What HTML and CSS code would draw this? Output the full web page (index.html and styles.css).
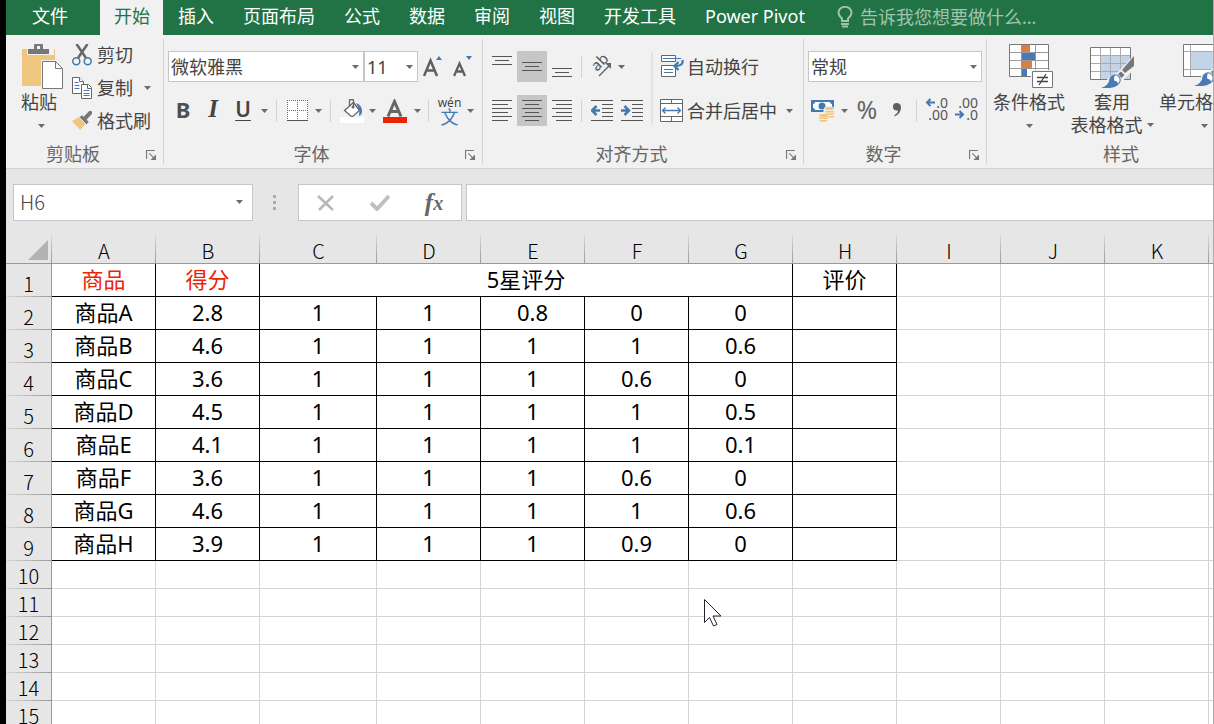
FILE: index.html
```
<!DOCTYPE html>
<html lang="zh-CN">
<head>
<meta charset="utf-8">
<title>Excel</title>
<link rel="stylesheet" href="styles.css">
</head>
<body>
<svg class="defs" aria-hidden="true">
  <symbol id="caret" viewBox="0 0 7 4"><path d="M0 0h7L3.500 4z" fill="#6b6b6b"/></symbol>
  <symbol id="launcher" viewBox="0 0 9 9"><path d="M.5 8V.5H8M3 3l4 4" fill="none" stroke="#777"/><path d="M9 4v5H4z" fill="#777"/></symbol>
  <symbol id="brush" viewBox="0 0 46 46"><path d="M46 7v15L35 32l-4 7q-4 5-10 5H8q9-3 9-10 4-7 10-7z" fill="#f1f1f1"/><path d="M44 10v10l-9 7-3-3z" fill="#777"/><path d="M31 25.500l3.500 3.500-3 3-3.500-4z" fill="#777"/><circle cx="25" cy="34" r="5.200" fill="#fff" stroke="#4a86bd" stroke-width="1.200"/><path d="M11 42q7-2 9-9 1-3 5-4-2 5 0 6 3 0 3 4-4 3-8 3z" fill="#4a7ab3"/></symbol>
</svg>
<div class="app">
  <nav class="tabs">
    <button class="tab file">文件</button>
    <button class="tab active">开始</button>
    <button class="tab">插入</button>
    <button class="tab">页面布局</button>
    <button class="tab">公式</button>
    <button class="tab">数据</button>
    <button class="tab">审阅</button>
    <button class="tab">视图</button>
    <button class="tab">开发工具</button>
    <button class="tab">Power Pivot</button>
    <button class="tab tell">
      <svg width="16" height="22" viewBox="0 0 16 22" fill="none" stroke="#a0c4ae" stroke-width="2"><path d="M5 15v-2.500C3 10.500 1.500 9.500 1.500 6.800a6.500 6 0 0 1 13 0c0 2.700-1.500 3.700-3.500 5.700V15z"/><path d="M4 18h8M5 20.500h6"/></svg>
      告诉我您想要做什么...</button>
  </nav>

  <div class="ribbon">
    <section class="group clipboard">
      <div class="body clip">
        <button class="big paste">
          <svg width="42" height="46" viewBox="0 0 42 46"><path d="M2 5h31q1 0 1 1v36H2q-1 0-1-1V6q0-1 1-1z" fill="#eec67e"/><path d="M6 4h27v7H6z" fill="#f1f1f1"/><path d="M7 10V5h6V1q0-1 1-1h7q1 0 1 1v4h6v5z" fill="#777"/><path d="M16 2h3v3h-3z" fill="#f1f1f1"/><path d="M20 16h15l8 8v22H20z" fill="#f1f1f1"/><path d="M21.500 17.500h13l7 7v20h-20z" fill="#fff" stroke="#777"/><path d="M34.500 17.500v7h7" fill="none" stroke="#777"/></svg>
          <span>粘贴</span>
          <svg class="caret"><use href="#caret"/></svg>
        </button>
        <div class="stack">
          <button class="cmd"><svg width="20" height="22" viewBox="0 0 20 22"><path d="M4.500 0 14 14M15.500 0 6 14" stroke="#666" stroke-width="2.500"/><g fill="none" stroke="#4179b0" stroke-width="1.500"><circle cx="4.300" cy="17.300" r="3.500"/><circle cx="15.700" cy="17.300" r="3.500"/></g></svg>剪切</button>
          <button class="cmd"><svg width="20" height="22" viewBox="0 0 20 22"><g fill="#fff" stroke="#666"><path d="M.5.500h7l4 4v12H.5z"/><path d="M7.500.500v4h4"/><path d="M9.500 7.500h7l3 3v11h-10z"/><path d="M15.500 7.500v4h4"/></g><path d="M2.500 5.500h4M2.500 8.500h5M2.500 11.500h5M11.500 13.500h6M11.500 16.500h6M11.500 18.500h6" stroke="#4179b0"/></svg>复制<svg class="caret"><use href="#caret"/></svg></button>
          <button class="cmd"><svg width="20" height="20" viewBox="0 0 22 22"><path d="M0 11 9 6l7 7-7 8z" fill="#eec67e"/><path d="M8 7l3-3 8 8-3 3z" fill="#777" stroke="#f1f1f1"/><path d="M14 8.500l6-6.500" stroke="#777" stroke-width="4.500" stroke-linecap="round"/></svg>格式刷</button>
        </div>
      </div>
      <footer><span>剪贴板</span><button aria-label="剪贴板设置"><svg width="10" height="10"><use href="#launcher"/></svg></button></footer>
    </section>

    <section class="group font">
      <div class="body rows">
        <div class="row">
          <div class="combo family"><select aria-label="字体"><option>微软雅黑</option></select><svg class="caret"><use href="#caret"/></svg></div>
          <div class="combo size"><select aria-label="字号"><option>11</option></select><svg class="caret"><use href="#caret"/></svg></div>
          <button class="tool a" aria-label="增大字号"><svg width="20" height="23" viewBox="0 0 20 23"><path d="M1 21 7.500 5.500 14 21M3.500 15.500h8" fill="none" stroke="#5f5f5f" stroke-width="2.500"/><path d="M13 5h6l-3-4z" fill="#4179b0"/></svg></button>
          <button class="tool a" aria-label="减小字号"><svg width="20" height="23" viewBox="0 0 20 23"><path d="M1 21 6.500 8.500 12 21M3.500 16.500h6.500" fill="none" stroke="#5f5f5f" stroke-width="2.300"/><path d="M13 1h6l-3 4z" fill="#4179b0"/></svg></button>
        </div>
        <div class="row">
          <button class="tool bold">B</button>
          <button class="tool italic">I</button>
          <button class="tool under">U</button>
          <button class="drop" aria-label="下划线选项"><svg class="caret"><use href="#caret"/></svg></button>
          <i class="sep"></i>
          <button class="tool" aria-label="边框"><svg width="21" height="21" viewBox="0 0 21 21"><path d="M0 0h21v21H0z" fill="#fff"/><path d="M.5 0v20M10.500 0v20M20.500 0v20M0 .500h21M0 10.500h21" stroke="#666" stroke-dasharray="1 1" fill="none"/><path d="M0 20.500h21" stroke="#555"/></svg></button>
          <button class="drop" aria-label="边框选项"><svg class="caret"><use href="#caret"/></svg></button>
          <i class="sep"></i>
          <button class="tool" aria-label="填充颜色"><svg width="24" height="24" viewBox="0 0 24 24"><path d="M4.500 11.500l9-8 6 8-7.500 6.500z" fill="#fff" stroke="#666" stroke-width="1.300"/><path d="M9.500 7V1.500q0-1 1-1h2q1 0 1 1V8" fill="none" stroke="#666" stroke-width="1.300"/><circle cx="13" cy="8" r="1.500" fill="#666"/><path d="M16 4q6 2 6 8 0 4-3 5 1-6-1-9z" fill="#4179b0"/><path d="M0 18h24v6H0z" fill="#fff"/></svg></button>
          <button class="drop" aria-label="填充颜色选项"><svg class="caret"><use href="#caret"/></svg></button>
          <button class="tool wide" aria-label="字体颜色"><svg width="24" height="24" viewBox="0 0 24 24"><path d="M5 17.500 11.500 2.500 18 17.500M7 12.500h9" fill="none" stroke="#666" stroke-width="3"/><path d="M0 18h24v6H0z" fill="#ed2305"/></svg></button>
          <button class="drop" aria-label="字体颜色选项"><svg class="caret"><use href="#caret"/></svg></button>
          <i class="sep"></i>
          <button class="tool pinyin"><span>wén</span><b>文</b></button>
          <button class="drop" aria-label="拼音选项"><svg class="caret"><use href="#caret"/></svg></button>
        </div>
      </div>
      <footer><span>字体</span><button aria-label="字体设置"><svg width="10" height="10"><use href="#launcher"/></svg></button></footer>
    </section>

    <section class="group align">
      <div class="body split">
        <div class="rows">
          <div class="row">
            <button class="tool a" aria-label="顶端对齐"><svg width="20" height="22" viewBox="0 0 20 22" stroke="#555"><path d="M0 .500h20M3 4.500h14M0 8.500h20"/></svg></button>
            <button class="tool a on" aria-label="垂直居中"><svg width="20" height="22" viewBox="0 0 20 22" stroke="#555"><path d="M0 6.500h20M3 10.500h14M0 14.500h20"/></svg></button>
            <button class="tool a" aria-label="底端对齐"><svg width="20" height="22" viewBox="0 0 20 22" stroke="#555"><path d="M0 12.500h20M3 16.500h14M0 20.500h20"/></svg></button>
            <i class="sep"></i>
            <button class="tool a" aria-label="方向"><svg class="orient" width="22" height="22" viewBox="0 0 22 22"><text class="ab" transform="translate(6 16) rotate(-45)">ab</text><path d="M8 20 19 9" stroke="#666" stroke-width="1.500"/><path d="M20 7v6l-6-6z" fill="#666"/></svg></button>
            <button class="drop slim" aria-label="方向选项"><svg class="caret"><use href="#caret"/></svg></button>
          </div>
          <div class="row">
            <button class="tool a" aria-label="左对齐"><svg width="20" height="22" viewBox="0 0 20 22" stroke="#555"><path d="M0 .500h20M0 4.500h16M0 8.500h20M0 12.500h16M0 16.500h20M0 20.500h16"/></svg></button>
            <button class="tool a on" aria-label="居中"><svg width="20" height="22" viewBox="0 0 20 22" stroke="#555"><path d="M0 .500h20M3 4.500h14M0 8.500h20M3 12.500h14M0 16.500h20M3 20.500h14"/></svg></button>
            <button class="tool a" aria-label="右对齐"><svg width="20" height="22" viewBox="0 0 20 22" stroke="#555"><path d="M0 .500h20M4 4.500h16M0 8.500h20M4 12.500h16M0 16.500h20M4 20.500h16"/></svg></button>
            <i class="sep"></i>
            <button class="tool a" aria-label="减少缩进"><svg width="22" height="22" viewBox="0 0 22 22"><path d="M0 .500h22M11 4.500h11M11 8.500h11M11 12.500h11M11 16.500h11M0 20.500h22" stroke="#555"/><path d="M9 10.500H2M5.500 6 1 10.500 5.500 15" fill="none" stroke="#4179b0" stroke-width="2.500"/></svg></button>
            <button class="tool a" aria-label="增加缩进"><svg width="22" height="22" viewBox="0 0 22 22"><path d="M0 .500h22M11 4.500h11M11 8.500h11M11 12.500h11M11 16.500h11M0 20.500h22" stroke="#555"/><path d="M0 10.500h7M3.500 6 8 10.500 3.500 15" fill="none" stroke="#4179b0" stroke-width="2.500"/></svg></button>
          </div>
        </div>
        <i class="divider"></i>
        <div class="rows">
          <div class="row"><button class="cmd"><svg width="24" height="23" viewBox="0 0 24 23"><g fill="#fff" stroke="#666"><path d="M1.500.500h14v6h-14zM1.500 10.500h14v11h-14z"/></g><path d="M3 3.500h18M4 14.500h9M4 17.500h9" stroke="#4179b0"/><path d="M22.500 5q1 6-7 6M18.500 7l-4 4 4 4" fill="none" stroke="#4179b0" stroke-width="2.300"/></svg>自动换行</button></div>
          <div class="row"><button class="cmd"><svg width="24" height="23" viewBox="0 0 24 23"><path d="M.5.500h22v22H.5z" fill="#fff" stroke="#666"/><path d="M0 4.500h23M0 17.500h23M11.500 0v4M11.500 18v5" stroke="#666"/><path d="M3 11.500h17M5.500 8.500l-3 3 3 3M17.500 8.500l3 3-3 3" fill="none" stroke="#4179b0" stroke-width="1.300"/></svg>合并后居中<svg class="caret"><use href="#caret"/></svg></button></div>
        </div>
      </div>
      <footer><span>对齐方式</span><button aria-label="对齐设置"><svg width="10" height="10"><use href="#launcher"/></svg></button></footer>
    </section>

    <section class="group number">
      <div class="body rows">
        <div class="row"><div class="combo"><select aria-label="数字格式"><option>常规</option></select><svg class="caret"><use href="#caret"/></svg></div></div>
        <div class="row">
          <button class="tool a" aria-label="会计数字格式"><svg width="24" height="24" viewBox="0 0 24 24"><path d="M0 1h23v12H0z" fill="#4179b0"/><path d="M4 3h15q0 2 2 2v4q-2 0-2 2H4q0-2-2-2V5q2 0 2-2z" fill="#fff"/><circle cx="11" cy="7" r="3.500" fill="#4179b0"/><path d="M13 10q0-3 5-3t5 3v8h-6v5H7v-6q0-3 5-3z" fill="#f1f1f1"/><g fill="#eec67e"><ellipse cx="18.500" cy="9.500" rx="4.500" ry="1.500"/><path d="M14 12h9v1.500h-9zM14 14.500h9V16h-9zM17 17h6v1.500h-6z"/><ellipse cx="12.500" cy="16.500" rx="4.500" ry="1.500"/><path d="M8 18.500h9V20H8zM8 21h9q-1 2-4.500 2T8 21z"/></g></svg></button>
          <button class="drop" aria-label="会计格式选项"><svg class="caret"><use href="#caret"/></svg></button>
          <button class="tool percent">%</button>
          <button class="tool comma" aria-label="千位分隔样式"><svg width="10" height="16" viewBox="0 0 10 16"><path d="M4.500 1Q9 1 9 5.500q0 6-6.500 9V13Q6 11 6 8.500 1 9 1 4.700 1 1 4.500 1z" fill="#5f5f5f"/></svg></button>
          <i class="sep"></i>
          <button class="tool a dec"><span><svg width="10" height="9" viewBox="0 0 10 9"><path d="M10 4.500H2M5.500 1 2 4.500 5.500 8" fill="none" stroke="#4179b0" stroke-width="2"/></svg>.0</span><span>.00</span></button>
          <button class="tool a dec"><span>.00</span><span><svg width="10" height="9" viewBox="0 0 10 9"><path d="M0 4.500h8M4.500 1 8 4.500 4.500 8" fill="none" stroke="#4179b0" stroke-width="2"/></svg>.0</span></button>
        </div>
      </div>
      <footer><span>数字</span><button aria-label="数字设置"><svg width="10" height="10"><use href="#launcher"/></svg></button></footer>
    </section>

    <section class="group styles">
      <div class="body bigs">
        <button class="big cond">
          <svg width="46" height="46" viewBox="0 0 46 46"><path d="M1.500.500h39v32h-39z" fill="#fff" stroke="#777"/><path d="M2 8.500h38M2 16.500h38M2 24.500h38M13.500 1v31M27.500 1v31" stroke="#999"/><path d="M14 1h8v7h-8zM14 17h10v7H14z" fill="#dc7d43"/><path d="M14 9h13v7H14zM14 25h5v7h-5z" fill="#4a7ab3"/><path d="M23 26h22v19H23z" fill="#f1f1f1"/><path d="M24.500 27.500h20v16h-20z" fill="#fff" stroke="#777"/><path d="M29 33.500h11M29 37.500h11M38 30l-7 11" stroke="#444" stroke-width="1.300"/></svg>
          <span>条件格式</span><svg class="caret"><use href="#caret"/></svg>
        </button>
        <button class="big fmt">
          <svg width="46" height="46" viewBox="0 0 46 46"><path d="M1.500 3.500h40v32h-40z" fill="#fff" stroke="#777"/><path d="M12 12h29v23H12z" fill="#c2d4e6"/><path d="M2 11.500h39M2 19.500h39M2 27.500h39M11.500 4v31M21.500 4v31M31.500 4v31" stroke="#aaa"/><use href="#brush" x="1" y="2" width="46" height="46"/></svg>
          <span>套用</span><span class="line2">表格格式<svg class="caret"><use href="#caret"/></svg></span>
        </button>
        <button class="big cell">
          <svg width="46" height="46" viewBox="0 0 46 46"><path d="M2.500.500h40v32h-40z" fill="#fff" stroke="#777"/><path d="M3 7.500h39M3 25.500h39M9.500 1v31M36.500 1v31" stroke="#aaa"/><path d="M10 8h26v17H10z" fill="#c2d4e6"/><use href="#brush" x="2" width="46" height="46"/></svg>
          <span>单元格样式</span><svg class="caret"><use href="#caret"/></svg>
        </button>
      </div>
      <footer><span>样式</span></footer>
    </section>
  </div>

  <div class="formula">
    <div class="combo namebox"><input aria-label="名称框" value="H6"><svg class="caret"><use href="#caret"/></svg></div>
    <svg class="dots" width="3" height="15" viewBox="0 0 3 15" fill="#aaa"><path d="M0 0h3v3H0zM0 6h3v3H0zM0 12h3v3H0z"/></svg>
    <div class="actions">
      <button aria-label="取消"><svg width="18" height="16" viewBox="0 0 18 16"><path d="M1 1l15 14M16 1 2 15" stroke="#b8b8b8" stroke-width="2.500"/></svg></button>
      <button aria-label="输入"><svg width="20" height="17" viewBox="0 0 20 17"><path d="M1 9l6 6L19 2" fill="none" stroke="#c0c0c0" stroke-width="4"/></svg></button>
      <button class="fx">f<small>x</small></button>
    </div>
    <input class="entry" aria-label="编辑栏">
  </div>

  <main class="sheet">
    <table>
      <colgroup><col class="c-head"><col class="c-std"><col class="c-std"><col class="c-wide"><col class="c-std" span="9"></colgroup>
      <thead><tr><th class="corner"><svg width="20" height="20" viewBox="0 0 20 20"><path d="M20 0v20H0z" fill="#b3b3b3"/></svg></th><th>A</th><th>B</th><th>C</th><th>D</th><th>E</th><th>F</th><th>G</th><th>H</th><th>I</th><th>J</th><th>K</th><th></th></tr></thead>
      <tbody class="data">
        <tr><th>1</th><td class="red">商品</td><td class="red">得分</td><td colspan="5">5星评分</td><td>评价</td><td></td><td></td><td></td><td></td></tr>
        <tr><th>2</th><td>商品A</td><td>2.8</td><td>1</td><td>1</td><td>0.8</td><td>0</td><td>0</td><td></td><td></td><td></td><td></td><td></td></tr>
        <tr><th>3</th><td>商品B</td><td>4.6</td><td>1</td><td>1</td><td>1</td><td>1</td><td>0.6</td><td></td><td></td><td></td><td></td><td></td></tr>
        <tr><th>4</th><td>商品C</td><td>3.6</td><td>1</td><td>1</td><td>1</td><td>0.6</td><td>0</td><td></td><td></td><td></td><td></td><td></td></tr>
        <tr><th>5</th><td>商品D</td><td>4.5</td><td>1</td><td>1</td><td>1</td><td>1</td><td>0.5</td><td></td><td></td><td></td><td></td><td></td></tr>
        <tr><th>6</th><td>商品E</td><td>4.1</td><td>1</td><td>1</td><td>1</td><td>1</td><td>0.1</td><td></td><td></td><td></td><td></td><td></td></tr>
        <tr><th>7</th><td>商品F</td><td>3.6</td><td>1</td><td>1</td><td>1</td><td>0.6</td><td>0</td><td></td><td></td><td></td><td></td><td></td></tr>
        <tr><th>8</th><td>商品G</td><td>4.6</td><td>1</td><td>1</td><td>1</td><td>1</td><td>0.6</td><td></td><td></td><td></td><td></td><td></td></tr>
        <tr><th>9</th><td>商品H</td><td>3.9</td><td>1</td><td>1</td><td>1</td><td>0.9</td><td>0</td><td></td><td></td><td></td><td></td><td></td></tr>
      </tbody>
      <tbody class="blank">
        <tr><th>10</th><td></td><td></td><td></td><td></td><td></td><td></td><td></td><td></td><td></td><td></td><td></td><td></td></tr>
        <tr><th>11</th><td></td><td></td><td></td><td></td><td></td><td></td><td></td><td></td><td></td><td></td><td></td><td></td></tr>
        <tr><th>12</th><td></td><td></td><td></td><td></td><td></td><td></td><td></td><td></td><td></td><td></td><td></td><td></td></tr>
        <tr><th>13</th><td></td><td></td><td></td><td></td><td></td><td></td><td></td><td></td><td></td><td></td><td></td><td></td></tr>
        <tr><th>14</th><td></td><td></td><td></td><td></td><td></td><td></td><td></td><td></td><td></td><td></td><td></td><td></td></tr>
        <tr><th>15</th><td></td><td></td><td></td><td></td><td></td><td></td><td></td><td></td><td></td><td></td><td></td><td></td></tr>
      </tbody>
    </table>
  </main>
  <svg class="pointer" width="18" height="28" viewBox="0 0 18 28"><path d="M.5.500v23l5-5 4 8.500 3.500-1.500-4-8.500h8z" fill="#fff" stroke="#223"/></svg>
</div>
</body>
</html>
```
FILE: styles.css
```
* { box-sizing: border-box; }
body { margin: 0; font: 18px/24px "Noto Sans", "Noto Sans CJK SC", sans-serif; color: #444; }
button, input, select { font: inherit; color: inherit; border: 0; padding: 0; margin: 0; background: none; }
svg { display: block; flex: none; }
.defs { display: none; }
.caret { width: 7px; height: 4px; }

.app { position: relative; display: flex; flex-direction: column; height: 100vh; overflow: hidden; border-left: 6px solid #000; border-right: 1px solid #ababab; background: #e6e6e6; }

/* tabs */
.tabs { display: flex; flex: none; height: 35px; background: #217346; overflow: hidden; }
.tab { flex: none; padding: 0 14px 4px 15px; color: #fff; white-space: nowrap; }
.tab.file { padding: 0 32px 4px 26px; }
.tab.active { padding: 0 13px 4px 14px; background: #f1f1f1; color: #217346; }
.tab.tell { display: flex; align-items: center; gap: 7px; margin-left: 3px; padding-bottom: 2px; color: #a0c4ae; }

/* ribbon */
.ribbon { display: flex; flex: none; height: 134px; padding: 4px 0; background: #f1f1f1; border-bottom: 1px solid #d2d2d2; overflow: hidden; }
.group { display: flex; flex: none; flex-direction: column; border-right: 1px solid #d2d2d2; }
.clipboard { width: 158px; }
.font { width: 319px; }
.align { width: 321px; }
.number { width: 183px; }
.body { flex: 1; padding: 0 4px; }
.group footer { display: flex; align-items: center; height: 22px; padding-top: 2px; color: #666; }
.group footer span { flex: 1; text-align: center; }
.group footer button { width: 18px; margin-right: 5px; padding: 2px 0 0 6px; }
.clip { display: flex; padding: 0 0 0 12px; }
.big { display: flex; flex-direction: column; align-items: center; padding-top: 5px; white-space: nowrap; }
.big span { line-height: 24px; }
.big > .caret { margin-top: 10px; }
.paste { width: 48px; }
.paste > span { margin-left: -6px; }
.paste > .caret { margin-left: -2px; }
.stack { display: flex; flex-direction: column; margin-left: 6px; }
.cmd { display: flex; align-items: center; gap: 3px; white-space: nowrap; }
.stack .cmd { height: 33px; gap: 5px; padding-bottom: 2px; }
.cmd .caret { margin-left: 6px; }
.rows { display: flex; flex-direction: column; gap: 13px; padding-top: 12px; }
.row { display: flex; align-items: center; height: 31px; }
.combo { display: flex; align-items: center; height: 31px; padding: 0 4px 0 2px; background: #fff; border: 1px solid #c6c6c6; }
.combo select, .combo input { flex: 1; min-width: 0; appearance: none; outline: 0; }
.family { width: 196px; }
.size { width: 54px; }
.number .combo { width: 174px; }
.tool { display: flex; flex: none; align-items: center; justify-content: center; width: 29px; height: 31px; }
.tool.a, .bold, .italic, .under { width: 30px; }
.tool.wide { width: 33px; }
.tool.on { background: #c6c6c6; }
.bold, .italic, .under { padding-bottom: 4px; }
.bold { font-size: 22px; font-weight: 700; color: #505050; }
.italic { font: italic 700 25px/24px "Liberation Serif", serif; }
.under { font-size: 21px; font-weight: 600; text-decoration: underline 1px; text-underline-offset: 3px; }
.drop { display: flex; align-items: center; justify-content: center; width: 12px; height: 31px; }
.slim { width: 8px; }
.sep { flex: none; width: 1px; height: 22px; margin: 0 6px; background: #d2d2d2; }
.font .tool.wide + .drop + .sep { margin: 0 6px 0 5px; }
.align .sep { margin: 0 5px 0 4px; }
.number .sep { margin: 0 5px 0 6px; }
.pinyin { flex-direction: column; font-size: 12px; line-height: 13px; }
.pinyin b { font-size: 18px; font-weight: 400; line-height: 17px; color: #4179b0; }
.split { display: flex; }
.divider { width: 2px; height: 73px; margin: 13px 7px 0 4px; background: #e3e3e3; }
.orient { overflow: visible; }
.ab { font: 15px "Noto Sans", sans-serif; fill: #555; }
.percent { width: 34px; padding-bottom: 4px; font-size: 25px; color: #666; }
.comma { width: 26px; padding-bottom: 2px; }
.dec { flex-direction: column; align-items: flex-end; padding-right: 4px; font-size: 14px; line-height: 12px; padding-bottom: 4px; color: #555; }
.dec span { display: flex; align-items: center; gap: 1px; }
.bigs { display: flex; width: 268px; }
.cond { width: 76px; }
.cond > svg:first-child { margin-left: 4px; }
.fmt { width: 90px; }
.cell { width: 94px; }
.big .line2 { display: flex; align-items: center; gap: 4px; line-height: 22px; }

/* formula bar */
.formula { display: flex; flex: none; align-items: center; padding: 15px 0 14px 7px; }
.namebox { width: 240px; height: 37px; padding: 0 9px 2px 6px; font-size: 20px; font-weight: 300; font-family: "Noto Sans CJK SC", sans-serif; }
.dots { margin: 0 22px 0 20px; }
.actions { display: flex; align-items: center; width: 164px; height: 37px; background: #fff; border: 1px solid #c6c6c6; }
.actions button { display: flex; justify-content: center; width: 54px; }
.fx { font: italic 700 25px/26px "Liberation Serif", serif; color: #666; }
.fx small { font-size: 20px; }
.entry { flex: 1; min-width: 0; height: 37px; margin-left: 4px; padding: 0 8px; background: #fff; border: 1px solid #c6c6c6; border-right: 0; outline: 0; }

/* sheet */
.sheet { flex: 1; overflow: hidden; }
table { width: 1307px; table-layout: fixed; border-collapse: separate; border-spacing: 0; color: #000; }
.c-head { width: 46px; }
.c-std { width: 104px; }
.c-wide { width: 117px; }
th, td { padding: 0; text-align: center; }
th { font: 300 20px/22px "Noto Sans CJK SC", sans-serif; vertical-align: bottom; }
thead th { height: 29px; padding-bottom: 1px; border-bottom: 1px solid #999; background: linear-gradient(#d8d8d8, #999) right / 1px 100% no-repeat; }
.corner svg { margin: 0 0 2px 22px; }
tbody th { padding-bottom: 2px; border-right: 1px solid #999; background: linear-gradient(90deg, #d8d8d8, #999) bottom / 100% 1px no-repeat; }
td { border-right: 1px solid #d4d4d4; border-bottom: 1px solid #d4d4d4; background: #fff; }
.data tr { height: 33px; }
.blank tr { height: 28px; }
.data td { padding-bottom: 2px; font-size: 22px; line-height: 30px; }
.data td:not(:nth-last-child(-n+4)) { border-color: #000; }
.data .red { color: #ed2305; }

.pointer { position: absolute; left: 698px; top: 599px; }
```
